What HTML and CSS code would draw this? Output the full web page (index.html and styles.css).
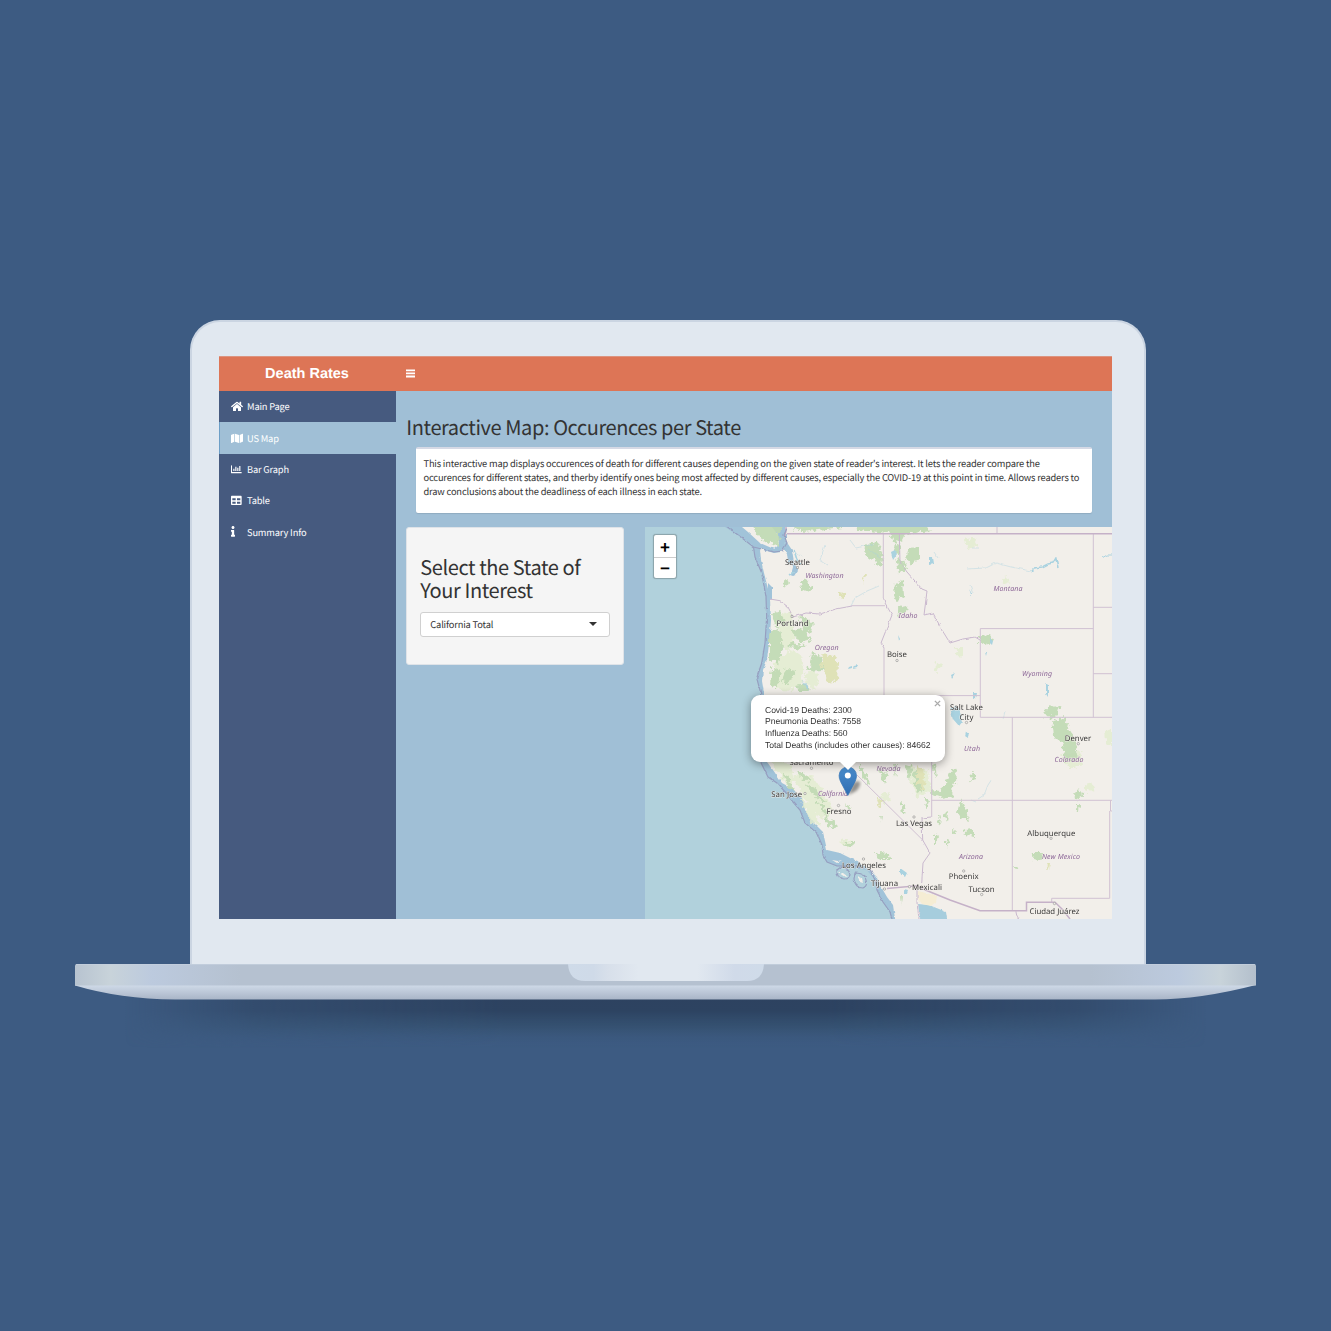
FILE: index.html
```html
<!DOCTYPE html>
<html lang="en">
<head>
<meta charset="utf-8">
<title>Death Rates</title>
<link rel="stylesheet" href="styles.css">
</head>
<body>
<main class="laptop">
  <div class="lid">
    <div class="screen">
      <header class="topbar">
        <div class="brand">Death Rates</div>
        <svg class="burger" viewBox="0 0 9 9"><path d="M0 .4h9v1.800H0zM0 3.500h9v1.800H0zM0 6.600h9v1.800H0z"/></svg>
      </header>
      <div class="app">
        <nav class="sidebar">
          <a class="item"><svg class="icon" viewBox="0 0 576 512"><path d="M280.37 148.26L96 300.11V464a16 16 0 0 0 16 16l112.06-.29a16 16 0 0 0 15.92-16V368a16 16 0 0 1 16-16h64a16 16 0 0 1 16 16v95.64a16 16 0 0 0 16 16.05L464 480a16 16 0 0 0 16-16V300L295.67 148.26a12.19 12.19 0 0 0-15.3 0zM571.6 251.47L488 182.56V44.05a12 12 0 0 0-12-12h-56a12 12 0 0 0-12 12v72.61L318.47 43a48 48 0 0 0-61 0L4.34 251.47a12 12 0 0 0-1.6 16.9l25.5 31A12 12 0 0 0 45.15 301l235.22-193.74a12.19 12.19 0 0 1 15.3 0L530.9 301a12 12 0 0 0 16.9-1.6l25.5-31a12 12 0 0 0-1.7-16.93z"/></svg><span>Main Page</span></a>
          <a class="item active"><svg class="icon" viewBox="0 0 576 512"><path d="M0 117.66v346.32c0 11.32 11.43 19.06 21.94 14.86L160 416V32L20.12 87.95A32.006 32.006 0 0 0 0 117.66zM192 416l192 64V96L192 32v384zM554.06 33.16L416 96v384l139.88-55.95A31.996 31.996 0 0 0 576 394.34V48.02c0-11.32-11.43-19.06-21.94-14.86z"/></svg><span>US Map</span></a>
          <a class="item"><svg class="icon" viewBox="0 0 576 512"><path d="M0 80q0-16 16-16h16q16 0 16 16v304h448q16 0 16 16v32q0 16-16 16H32q-32 0-32-32zM110 230h56v110h-56zM205 130h56v210h-56zM300 180h56v160h-56zM395 90h56v250h-56z"/></svg><span>Bar Graph</span></a>
          <a class="item"><svg class="icon" viewBox="0 0 576 512"><path d="M464 32H48C21.49 32 0 53.49 0 80v352c0 26.51 21.49 48 48 48h416c26.51 0 48-21.49 48-48V80c0-26.51-21.49-48-48-48zM224 416H64v-96h160v96zm0-160H64v-96h160v96zm224 160H288v-96h160v96zm0-160H288v-96h160v96z"/></svg><span>Table</span></a>
          <a class="item"><svg class="icon" viewBox="0 0 576 512"><path d="M20 424.229h20V279.771H20c-11.046 0-20-8.954-20-20V212c0-11.046 8.954-20 20-20h112c11.046 0 20 8.954 20 20v212.229h20c11.046 0 20 8.954 20 20V492c0 11.046-8.954 20-20 20H20c-11.046 0-20-8.954-20-20v-47.771c0-11.046 8.954-20 20-20zM96 0C56.235 0 24 32.235 24 72s32.235 72 72 72 72-32.235 72-72S135.764 0 96 0z"/></svg><span>Summary Info</span></a>
        </nav>
        <section class="content">
          <h2 class="title">Interactive Map: Occurences per State</h2>
          <div class="box">This interactive map displays occurences of death for different causes depending on the given state of reader's interest. It lets the reader compare the<br>occurences for different states, and therby identify ones being most affected by different causes, especially the COVID-19 at this point in time. Allows readers to<br>draw conclusions about the deadliness of each illness in each state.</div>
          <div class="row">
            <aside class="well">
              <h2 class="well-title">Select the State of<br>Your Interest</h2>
              <div class="select"><span>California Total</span><i class="caret"></i></div>
            </aside>
            <div class="map">
              <svg class="tiles" viewBox="645 527 467 392">
                <defs>
                  <filter id="rough" x="-5%" y="-5%" width="110%" height="110%">
                    <feTurbulence type="fractalNoise" baseFrequency=".22" numOctaves="3" seed="4"/>
                    <feDisplacementMap in="SourceGraphic" scale="8" xChannelSelector="R" yChannelSelector="G"/>
                    <feGaussianBlur stdDeviation=".35"/>
                  </filter>
                  <filter id="wobble" x="-5%" y="-5%" width="110%" height="110%">
                    <feTurbulence type="fractalNoise" baseFrequency=".2" numOctaves="2" seed="9"/>
                    <feDisplacementMap in="SourceGraphic" scale="3" xChannelSelector="R" yChannelSelector="G"/>
                    <feGaussianBlur stdDeviation=".25"/>
                  </filter>
                </defs>
                <rect x="645" y="527" width="467" height="392" fill="#b1d1dc"/>
                <!-- territorial water -->
                <path fill="#a1c3d9" d="M725 527L742 538L753.500 547L755 557L761.700 573L766 597L766.700 617L765 643L761.700 663L756.700 678L760.700 693L759 735L760.700 762L768 777L777 783L787 794L793 802L800 810L805 823L817 833L822 845L823 855L827 862L837 866L866.700 870L875 880L877 890L883 902L890 912L892 919H960V527Z"/>
                <!-- land -->
                <g filter="url(#wobble)">
                  <path fill="#f2efea" d="M783 520L786 530L786 540L781 552L774 553L760 549L761 560L764 573L768.300 590L770 600L771 620L769.500 640L767 660L763 670L762 681L764 693L764 735L767 762L773 770L782 783L793 789L803 800L805 810L813 822L823 832L827 850L840 853L850 858L860 862L867 868L877 877L880 885L887 897L893 905L896 925H1120V520Z"/>
                  <path fill="#f2efea" d="M736 522L748 532L760 543L774 549L779 545L778 535L768 522Z"/>
                  <path fill="#a6cddd" d="M918 904L929 905L939 909L946 912L948 925H921Z"/>
                  <path fill="#a1c3d9" d="M786 541l6 9 2 12 4 8-4 6-3-1 2-8-5-4-1-9-5-7zM768 583l4 4v12l-4 2z"/>
                  <path fill="#f2efea" d="M832 860l6 1 4-1-5 3zM839 873l4 0 4 3-2 1zM858 877l4 2 1 4-3-1z"/>
                  <path fill="#f5edd4" d="M918 891l19 5-1 6-5 4-9-2-5-7z"/>
                </g>
                <!-- pale scrub -->
                <g fill="#e3edcf" opacity=".8" filter="url(#rough)">
                  <path d="M780 615l12-5 3 26-7 18-7-10zM775 660l18-10 10 8-2 26-14 8-18-8zM803 674l12-4 4 12-8 8zM770 760l20 4 6 16-8 6zM793 776l18-2 10 14 12 22-8 10-14-8zM800 798l12 10 8 18-8-3zM964 540l10-2 4 8-10 3zM1000 579l8-2 2 4-8 3zM955 648l8 0 0 8-6-1zM936 662l6 2-4 8-4-2zM1060 755l20-4 4 12-14 6zM1105 730l7-2v20l-6-6zM880 795l8-2 3 8-7 2zM840 838l12 4-5 7zM905 765l22 5 4 20-14 8zM1084 785l8-2 3 6-9 3z"/>
                </g>
                <!-- forest -->
                <g fill="#c0dab3" opacity=".9" filter="url(#rough)">
                  <path d="M748 522l28 0 4 16-3 8-12-4zM766 522h20l-6 10zM800 582l6-3 6 8-2 6-9-4zM782 582l4-3 2 4-3 4zM865 546l12-5 6 14-3 12-8-8-8-3zM782 523l60 0 0 4-40 5zM855 525l70 0 6 6-26 3-4 8-8-1-4-8-32-3zM895 542l7 3-3 10-5-5zM908 548l12-1 0 12-9 5-4-5zM896 558l8 2 3 11-8 2zM895 583l8-3 1 16-8 5-2-6zM898 608l8-2 2 5-9 4z"/>
                  <path d="M772 614l8-3 4 12-8 6zM769 632l11-4 3 20-5 16-9-4zM799 615l14 7-2 8-9-2zM791 630l20-3-4 9 4 4-11 3zM788 643l18 2-5 4-12-2zM812 652l10 6 2 12-16 1zM786 668l10 2-8 14-7-2zM772 668l9 3-4 16-7-1zM795 685l12-2 2 9-12 0zM980 636l10-1 4 6-8 4-6-3zM1042 712l8-7 9 4-2 9-11-1zM1052 720l12-2 4 10 8 10-1 14-7 2-6-13-8-3-1-11zM1062 746l14 4 2 9-12 4z"/>
                  <path d="M931 790l10 1 5-8 4-11 8-3-2 12-5 8 2 8-10 2-11-4zM932 763l3 1 2 14-3-3zM971 774l4-3 0 8-5 3zM957 812l4-13 4 8 4 14-8-3zM963 831l11-1 0 7-9-2zM1074 795l6-7 2 8-7 4zM1075 804l5 0-1 8-4-5zM1033 852l10 0-1 8-10-1zM1014 866l4 0-1 4zM937 820l4-4-1 10zM944 814l4-2-1 9zM935 833l3 5-3 7zM946 841l3-2-3 10zM952 830l3 1-3 4z"/>
                  <path d="M795 770l12 4 5 8-10-2zM782 772l5 4 8 14-6-3zM805 784l10 5 12 14-8-2zM815 800l8 6 8 10-7-2zM824 815l10 7 4 6-10-2zM846 842l8 0-1 6-9-1zM874 852l14 2 4 5-12 0zM845 804l8 4-6 3zM860 762l4 10 7 10-3 2-8-10zM878 768l10 6-3 10-4-8zM893 764l4 0-2 13zM905 765l7 2-3 14zM913 772l7-2 5 20-8 4zM900 800l4 6 2 9-4-2zM925 797l4 4-3 10zM880 814l2 0-1 8zM901 896l2 0-1 8z"/>
                </g>
                <g fill="#dfe2b7" filter="url(#rough)"><path d="M822 654l13 2 3 6-1 19-10 2-2-12-5-5 4-5zM840 592l6 1 0 5-6-1zM863 573l3 0-2 12zM917 765l8 8-1 18-7-8zM1046 863l4 0-1 7zM877 797l6 4-4 7z"/></g>
                <!-- lakes and rivers -->
                <g fill="#a9d2e0" filter="url(#wobble)">
                  <path d="M950 708l8-1 5 14-4 5-6-7zM966 731l3 1-1 6-3-2zM929 557l3 0 1 7-4 1zM891 552l4-2 2 4-4 6zM990 638l3 3-1 4-2-2zM849 667l3-1 0 2-4 1zM854 666l4-1-1 3-4 1zM804 683l3 3 2 5-4-4zM900 868l7 5-2 4-5-4zM951 675l4-2-3 5zM973 693l4 0-1 5-3 1zM1046 683l2 2 0 12-2-3zM904 890l4 1-1 3-3 0zM985 652l2 0-1 4zM898 635l2 4-1 2zM969 589l3 5 0 3z"/>
                </g>
                <g fill="none" stroke="#a9d2e0" stroke-width="1" filter="url(#wobble)">
                  <path stroke-width="1.600" d="M1031 571l3-3 8-1 6-3 5-1 3-5 2 10M794 550l3 10 4 4M794 572l-5 3"/>
                  <path stroke-width=".6" opacity=".7" d="M1031 571l-20-4-15-4-10 5-20 1M851 606l4-8 12-7 12-5M825 545l-5 15 8 5M850 540l6 8 18-4M868 549l12 8M970 585l3 8M934 552l4 6M972 548h7M978 799l6-4 4-10 4-6M976 802l-5-2M1003 719l2-8M796 553l6 4M788 563l8 2M806 686l-4-6"/>
                  <path d="M1102 558l5-3h5"/>
                </g>
                <!-- borders -->
                <g fill="none" stroke="#d0c1d2" stroke-width="1">
                  <path d="M883.300 534V598M885 605.700H851.700M884 648V695.500M980.300 628.600H1093.300M980.300 628.600V717.300H1112M1093.300 534V717.300M1093.300 607.300H1112M1093.300 673.700H1112M884 695.600H980.300M1012.300 717.300V911M931.700 695.600V817M931.700 800.300H1112M1110.500 800.300V811H1112M1109.700 811V898.300H1051.700V902M857 775L922.700 840M997 527v6.700"/>
                  <g filter="url(#wobble)" stroke="#c9b8ce">
                    <path d="M883.300 597L885 603L892 615L881 643L884 648M770 599L780 600.700L788 607L793 617L806 613L820 614L836 609L852 606M899.300 534L900 562L907 572L922 589L927 591L924 615L933 613L942 630L950 643L963 639L975 637L980 640M931 817L922 818L922.700 840L930 853L923 863L921.700 883M917 886V903L919 919M1016 911l1 5 2 3"/>
                  </g>
                  <path stroke="#c5b1c8" stroke-width="1.500" d="M787 533.700H1112M887 888.500L917 885.700L923 889L950 900L980 910.700H1026.500V902.300H1055L1062 909L1070 919M786 527v4l-1 5"/>
                </g>
                <g fill="none" stroke="#969fc0" stroke-width="1.200" filter="url(#wobble)">
                  <path d="M725 525L742 538L753.500 547L774 552L782 551L787 543L784 535L787 528M753.500 547L755 557L761.700 573L766 597L766.700 617L765 643L761.700 663L756.700 678L760.700 693L759 735L760.700 762L768 777L777 783L787 794L793 802L800 810L805 823L817 833L822 845L823 855L827 862L837 866L850 866L864 868M870 869L875 880L877 890L883 902L890 912L892 919"/>
                  <path d="M837 870q5-5 10-1 3 3 3 6-2 4-6 4-8-1-7-9zM855 873q6 0 10 3 4 10-2 12-8 0-9-9z"/>
                </g>
                <!-- place labels -->
                <g class="city">
                  <g fill="#f2efea" stroke="#8e8e8e" stroke-width=".6"><path d="M796.500 566.500h2v2h-2zM791 615.500h2v2h-2z"/><circle cx="897" cy="660.500" r="1.200"/><circle cx="966.500" cy="722.500" r="1.200"/><circle cx="1078.300" cy="743.700" r="1.200"/><circle cx="811.500" cy="768.300" r="1.200"/><circle cx="805" cy="793.500" r="1.200"/><circle cx="838.500" cy="805.500" r="1.200"/><circle cx="914" cy="817" r="1.200"/><circle cx="1051" cy="838.300" r="1.200"/><circle cx="863.500" cy="859" r="1.200"/><circle cx="884.500" cy="889" r="1.200"/><circle cx="909.500" cy="886.700" r="1.200"/><circle cx="963.700" cy="871" r="1.200"/><circle cx="981.700" cy="894.500" r="1.200"/><circle cx="1054.500" cy="903.500" r="1.200"/></g>
                  <text x="797.500" y="565" textLength="25">Seattle</text>
                  <text x="792.500" y="625.800" textLength="32">Portland</text>
                  <text x="897" y="657.200" textLength="20">Boise</text>
                  <text x="966.500" y="709.700" textLength="33">Salt Lake</text>
                  <text x="966.500" y="719.500" textLength="14">City</text>
                  <text x="1078" y="741.200" textLength="26.500">Denver</text>
                  <text x="811.500" y="765.200" textLength="44">Sacramento</text>
                  <text x="786.700" y="797" textLength="31">San Jose</text>
                  <text x="839" y="814" textLength="25">Fresno</text>
                  <text x="914" y="826" textLength="36">Las Vegas</text>
                  <text x="1051.300" y="836" textLength="48">Albuquerque</text>
                  <text x="864" y="868" textLength="44">Los Angeles</text>
                  <text x="884.500" y="886.200" textLength="27">Tijuana</text>
                  <text x="927" y="889.500" textLength="30">Mexicali</text>
                  <text x="963.700" y="879" textLength="30">Phoenix</text>
                  <text x="981.500" y="891.800" textLength="26">Tucson</text>
                  <text x="1054.500" y="914" textLength="50">Ciudad Juárez</text>
                </g>
                <g class="state">
                  <text x="824.500" y="578" textLength="38">Washington</text>
                  <text x="826.700" y="650.300" textLength="24">Oregon</text>
                  <text x="908" y="617.800" textLength="19">Idaho</text>
                  <text x="1008" y="591.300" textLength="29">Montana</text>
                  <text x="1037" y="676" textLength="30">Wyoming</text>
                  <text x="972" y="750.700" textLength="16">Utah</text>
                  <text x="1069" y="761.700" textLength="29">Colorado</text>
                  <text x="888.500" y="771" textLength="24">Nevada</text>
                  <text x="833" y="795.500" textLength="30">California</text>
                  <text x="971" y="858.500" textLength="24">Arizona</text>
                  <text x="1061" y="858.500" textLength="38">New Mexico</text>
                </g>
              </svg>
              <div class="zoomer"><span>+</span><span>−</span></div>
              <svg class="pin" viewBox="0 0 34 32">
                <defs>
                  <linearGradient id="pinfill" x1="0" y1="0" x2="0" y2="1"><stop offset="0" stop-color="#4a8dcc"/><stop offset="1" stop-color="#2f6db1"/></linearGradient>
                  <filter id="soft"><feGaussianBlur stdDeviation="1.400"/></filter>
                </defs>
                <path filter="url(#soft)" fill="#000" opacity=".4" d="M10 29L15 17Q19 14 22 16Q23 20 18 25Z"/>
                <path fill="url(#pinfill)" stroke="#3272b4" stroke-width=".7" d="M9.800 29.500L2.500 15.500Q1 12 1.100 9.600A8.700 8.700 0 0 1 18.500 9.600Q18.600 12 17.100 15.500Z"/>
                <circle cx="9.800" cy="9.500" r="3" fill="#fff"/>
              </svg>
              <div class="popup">Covid-19 Deaths: 2300<br>Pneumonia Deaths: 7558<br>Influenza Deaths: 560<br>Total Deaths (includes other causes): 84662<svg class="close" viewBox="0 0 8 8"><path d="M1 1l6 6M7 1L1 7"/></svg></div>
            </div>
          </div>
        </section>
      </div>
    </div>
  </div>
  <svg class="base" viewBox="0 0 1181 100">
    <defs>
      <linearGradient id="deck"><stop offset="0" stop-color="#b7c3d0"/><stop offset=".03" stop-color="#c8d3da"/><stop offset=".065" stop-color="#bccade"/><stop offset=".14" stop-color="#b5c1d0"/><stop offset=".86" stop-color="#b5c1d0"/><stop offset=".935" stop-color="#bccade"/><stop offset=".97" stop-color="#c8d3da"/><stop offset="1" stop-color="#b3bfcc"/></linearGradient>
      <linearGradient id="edge" x1="0" y1="0" x2="0" y2="1"><stop offset="0" stop-color="#cfdae8"/><stop offset="1" stop-color="#a9b5c7"/></linearGradient>
      <linearGradient id="notch"><stop offset="0" stop-color="#cfdbe9"/><stop offset=".13" stop-color="#cfdae8"/><stop offset=".2" stop-color="#d7dfea"/><stop offset=".36" stop-color="#e1e8f0"/><stop offset=".66" stop-color="#e1e8f0"/><stop offset=".85" stop-color="#d0dae9"/><stop offset="1" stop-color="#cfdbe9"/></linearGradient>
      <linearGradient id="shade" x1="0" y1="0" x2="0" y2="1"><stop offset="0" stop-color="#2d4260"/><stop offset=".28" stop-color="#2d4361"/><stop offset=".6" stop-color="#34506f" stop-opacity=".85"/><stop offset="1" stop-color="#3d5b82" stop-opacity="0"/></linearGradient>
      <linearGradient id="fade"><stop offset="0" stop-color="#000"/><stop offset=".12" stop-color="#999"/><stop offset=".35" stop-color="#fff"/><stop offset=".65" stop-color="#fff"/><stop offset=".88" stop-color="#999"/><stop offset="1" stop-color="#000"/></linearGradient>
      <mask id="sides"><rect x="50" y="20" width="1081" height="80" fill="url(#fade)"/></mask>
    </defs>
    <rect x="50" y="32" width="1081" height="52" fill="url(#shade)" mask="url(#sides)"/>
    <path fill="url(#edge)" d="M0 21H1181Q1125 35.500 1080 35.500H100Q45 35 0 21.500Z"/>
    <path fill="url(#deck)" d="M0 2q0-2 2-2H1179q2 0 2 2V21.500H0Z"/>
    <path fill="#c4cfde" d="M1 0H1180v.8H1z"/>
    <path fill="url(#notch)" d="M493 0H689Q688 17 672 17H510Q494 17 493 0Z"/>
  </svg>
</main>
</body>
</html>
```
FILE: styles.css
```css
* { box-sizing: border-box; }
body {
  margin: 0;
  height: 1331px;
  overflow: hidden;
  background: #3d5b82;
  color: #333;
  font-family: "Noto Sans CJK SC", "Open Sans", sans-serif;
  text-rendering: geometricPrecision;
}
.laptop {
  display: flex;
  flex-direction: column;
  align-items: center;
  padding-top: 320px;
}
.lid {
  width: 956px;
  height: 644px;
  padding: 34px 27px 0;
  border: 2px solid #cbd5e2;
  border-bottom: 0;
  border-radius: 30px 30px 0 0;
  background: #e1e8f0;
  margin-left: 5px;
}
.screen {
  display: flex;
  flex-direction: column;
  width: 893px;
  height: 563px;
  overflow: hidden;
}
.topbar {
  display: flex;
  align-items: center;
  height: 35px;
  flex: none;
  background: #dd7556;
  border-top: 1px solid #dc9480;
}
.brand {
  width: 176px;
  padding-top: 1px;
  text-align: center;
  color: #fff;
  font: bold 14.5px/33px "Liberation Sans", Arial, sans-serif;
}
.burger { width: 9px; height: 9px; margin-left: 11px; margin-top: -2px; fill: #fff; }
.app { display: flex; flex: 1; min-height: 0; }
.sidebar { width: 176.5px; flex: none; background: #465a7f; }
.item {
  display: flex;
  align-items: center;
  height: 31.3px;
  padding-left: 12px;
  color: #fff;
  font-size: 9.3px;
  letter-spacing: -.165px;
}
.item span { margin-top: -.5px; }
.item.active { background: #a0bfd6; border-left: 1px solid #6d9fc7; padding-left: 11px; }
.icon { width: 12px; height: 10.7px; margin-right: 4px; fill: #fff; }
.content { flex: 1; min-width: 0; background: #a0bfd6; padding: 22.5px 0 0 10.8px; }
.title, .well-title { margin: 0; font-weight: 400; font-size: 20px; letter-spacing: -.405px; white-space: nowrap; }
.title { line-height: 25px; }
.box {
  width: 676px;
  height: 66px;
  margin: 8px 0 0 10.200px;
  padding: 7px 7px;
  background: #fff;
  border-top: 2px solid #d5d9e5;
  border-radius: 2px;
  box-shadow: 0 1px 1px rgba(0, 0, 0, .1);
  font-size: 9.3px;
  letter-spacing: -.165px;
  line-height: 14.1px;
  white-space: nowrap;
}
.row { display: flex; margin-top: 14.500px; }
.well {
  width: 218px;
  height: 138px;
  flex: none;
  padding: 26.500px 13px 0;
  background: #f5f5f5;
  border: 1px solid #dfe3e8;
  border-radius: 3px;
}
.well-title { line-height: 23.8px; }
.select {
  display: flex;
  align-items: center;
  justify-content: space-between;
  width: 190px;
  height: 25px;
  margin-top: 10px;
  padding: 0 12px 1px 9px;
  background: #fff;
  border: 1px solid #d0d0d0;
  border-radius: 3px;
  font-size: 9.3px;
  letter-spacing: -.165px;
}
.caret { border: 4px solid transparent; border-top-color: #333; border-bottom: 0; }
.map { position: relative; width: 467px; height: 392px; margin-left: 20.700px; flex: none; overflow: hidden; }
.tiles { display: block; width: 467px; height: 392px; }
.city text, .state text { font-family: "Noto Sans", sans-serif; text-anchor: middle; paint-order: stroke; stroke: #f2efeacc; stroke-width: 1px; }
.city text { font-size: 7.8px; fill: #3a3a3a; }
.state text { font-size: 7.1px; font-style: italic; fill: #8d6898; }
.zoomer {
  position: absolute;
  left: 8px;
  top: 7px;
  width: 24px;
  height: 45px;
  background: #fff;
  border: 1px solid #8da6ad;
  border-radius: 3px;
  box-shadow: 0 0 1px #7c959e;
}
.zoomer span {
  display: block;
  height: 22px;
  text-align: center;
  color: #000;
  font: bold 17px/25px "Liberation Sans", Arial, sans-serif;
}
.zoomer span + span { border-top: 1px solid #ccc; line-height: 22px; }
.pin { position: absolute; left: 193px; top: 239px; width: 34px; height: 32px; }
.popup {
  position: absolute;
  left: 106px;
  top: 168px;
  width: 194px;
  height: 67px;
  padding: 9.500px 14px;
  background: #fff;
  border-radius: 9px;
  box-shadow: 0 2px 10px rgba(0, 0, 0, .4);
  font: 8.6px/11.75px "Liberation Sans", Arial, sans-serif;
  letter-spacing: -.05px;
  white-space: nowrap;
}
.popup::after {
  content: "";
  position: absolute;
  left: 89px;
  top: 67px;
  border: 8px solid transparent;
  border-top-color: #fff;
  border-bottom: 0;
}
.close { position: absolute; right: 4px; top: 4.500px; width: 7px; height: 7px; stroke: #aaa; stroke-width: 1.600; fill: none; }
.base { display: block; width: 1181px; height: 100px; }
```
